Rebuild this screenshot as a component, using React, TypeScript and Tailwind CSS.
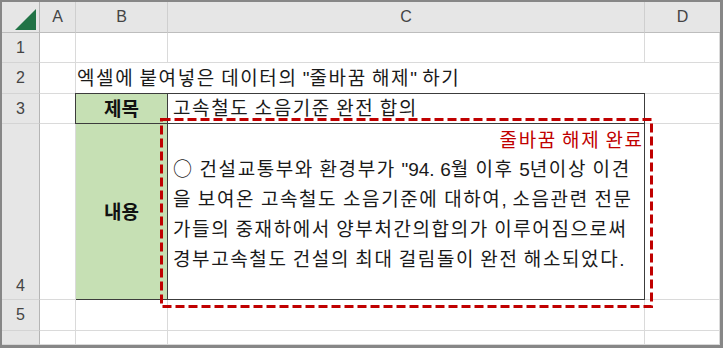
import React from 'react';

const kr = "font-['Liberation_Sans','Noto_Sans_CJK_KR',sans-serif]";
const hd = "font-['Liberation_Sans','Noto_Sans',sans-serif]";

const grid = 'border-r border-b border-[#dadada]';

// Hangul runs get a little extra tracking so they take the width the sheet font gives them
const Ko = ({ text }: { text: string }) => (
  <>
    {text.split(/([\uAC00-\uD7A3○]+)/).map((part, i) =>
      /[\uAC00-\uD7A3○]/.test(part) ? (
        <span key={i} className="font-['Noto_Sans_CJK_KR',sans-serif] tracking-[1.6px]">
          {part}
        </span>
      ) : (
        <span key={i}>{part}</span>
      )
    )}
  </>
);

const ColHead = ({ label, last }: { label?: string; last?: boolean }) => (
  <div
    className={`flex items-center justify-center bg-[#e6e6e6] border-b border-[#bdbdbd] ${
      last ? '' : 'border-r border-r-[#cfcfcf]'
    } text-[16px] text-[#444] ${hd}`}
  >
    {label}
  </div>
);

const RowHead = ({ n, align = 'center' }: { n: string; align?: 'center' | 'end' | 'start' }) => (
  <div
    className={`flex justify-center bg-[#e6e6e6] border-r border-r-[#b5b5b5] border-b border-b-[#d4d4d4] text-[16px] text-[#444] overflow-hidden ${hd} ${
      align === 'end' ? 'items-end pb-[1px]' : align === 'start' ? 'items-start pt-[8px]' : 'items-center'
    }`}
  >
    {n}
  </div>
);

const Cell = ({ children, className = '' }: { children?: React.ReactNode; className?: string }) => (
  <div className={`${grid} ${className}`}>{children}</div>
);

const lines = [
  { text: '○ 건설교통부와 환경부가 "94. 6월 이후 5년이상 이견', pad: 'pr-[15px]' },
  { text: '을 보여온 고속철도 소음기준에 대하여, 소음관련 전문', pad: 'pr-[13px]' },
  { text: '가들의 중재하에서 양부처간의합의가 이루어짐으로써', pad: 'pr-[18px]' },
  { text: '경부고속철도 건설의 최대 걸림돌이 완전 해소되었다.', pad: '' },
];

export default function App() {
  return (
    <div className="relative w-[723px] h-[348px] overflow-hidden bg-white border-t-2 border-l-2 border-r-[3px] border-b-[3px] border-[#878787]">
      <div className="grid grid-cols-[38px_36px_92px_477px_75px] grid-rows-[31px_30px_31px_30px_176px_31px_14px]">
        {/* header row */}
        <div className="relative bg-[#e6e6e6] border-r border-r-[#b5b5b5] border-b border-[#bdbdbd]">
          <svg className="absolute left-0 top-0" width="38" height="31" viewBox="0 0 38 31">
            <polygon points="13,28 34,28 34,7" fill="#217346" />
          </svg>
        </div>
        <ColHead label="A" />
        <ColHead label="B" />
        <ColHead label="C" />
        <ColHead label="D" last />

        {/* row 1 */}
        <RowHead n="1" />
        <Cell />
        <Cell />
        <Cell />
        <Cell />

        {/* row 2 */}
        <RowHead n="2" />
        <Cell />
        <div className={`col-span-2 flex items-center pl-[1px] pt-[1px] border-b border-[#dadada] whitespace-nowrap text-[19px] text-[#1a1a1a] ${kr}`}>
          <span>
            <Ko text={'엑셀에 붙여넣은 데이터의 "줄바꿈 해제" 하기'} />
          </span>
        </div>
        <Cell />

        {/* rows 3-4 */}
        <RowHead n="3" />
        <Cell />
        <div className="col-span-2 row-span-2 -ml-px -mt-px border border-[#3c3c3c] grid grid-cols-[92px_1fr] grid-rows-[30px_1fr]">
          <div className="flex items-center justify-center bg-[#c6e0b4] border-r border-b border-[#3c3c3c] font-bold text-[19px] text-[#111] font-['Noto_Sans_CJK_KR',sans-serif]">
            제목
          </div>
          <div className={`flex items-center pl-[5px] border-b border-[#3c3c3c] whitespace-nowrap text-[19px] text-[#1a1a1a] ${kr}`}>
            <span>
              <Ko text="고속철도 소음기준 완전 합의" />
            </span>
          </div>
          <div className="flex items-center justify-center bg-[#c6e0b4] border-r border-[#3c3c3c] font-bold text-[19px] text-[#111] font-['Noto_Sans_CJK_KR',sans-serif]">
            내용
          </div>
          <div className={`flex flex-col pl-[5px] pr-[6px] pt-[1px] whitespace-nowrap text-[19px] text-[#1a1a1a] ${kr}`}>
            <div className="h-[28px] leading-[28px] pr-[2px] text-right text-[#c00000]">
              <Ko text="줄바꿈 해제 완료" />
            </div>
            {lines.map((l, i) => (
              <div
                key={l.text}
                className={`h-[30px] leading-[30px] ${l.pad} ${
                  i < lines.length - 1 ? 'text-justify [text-align-last:justify]' : ''
                }`}
              >
                <Ko text={l.text} />
              </div>
            ))}
          </div>
        </div>
        <Cell />

        <RowHead n="4" align="end" />
        <Cell />
        <Cell />

        {/* row 5 */}
        <RowHead n="5" />
        <Cell />
        <Cell />
        <Cell />
        <Cell />

        {/* row 6 (cut off by the window) */}
        <RowHead n="6" align="start" />
        <Cell />
        <Cell />
        <Cell />
        <Cell />
      </div>

      {/* red dashed marker drawn over the sheet */}
      <svg className="absolute left-0 top-0 pointer-events-none" width="718" height="343">
        <rect
          x="159.5"
          y="117.5"
          width="490"
          height="187"
          fill="none"
          stroke="#c00000"
          strokeWidth="3"
          strokeDasharray="9 4"
        />
      </svg>
    </div>
  );
}
